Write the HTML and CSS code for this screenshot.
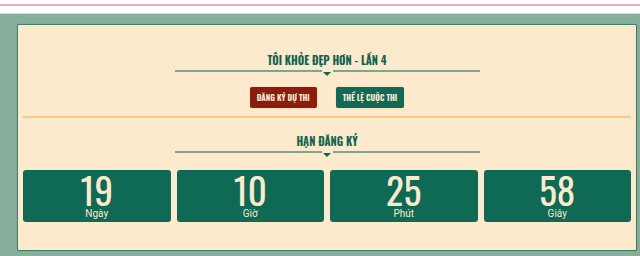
FILE: index.html
```html
<!DOCTYPE html>
<html>
<head>
  <meta charset="utf-8">
  <title>Tôi khỏe đẹp hơn - Lần 4</title>
  <link rel="stylesheet" href="styles.css">
</head>
<body>

  <div class="topbar"></div>

  <div class="main">
    <div class="card">

      <h2 class="tieude tieude-dau">TÔI KHỎE ĐẸP HƠN - LẦN 4</h2>
      <div class="divider">
        <span class="line"></span>
        <span class="mid"><i class="tri"></i></span>
        <span class="line"></span>
      </div>

      <div class="nut-hang">
        <a class="nut nut-do" href="#">ĐĂNG KÝ DỰ THI</a>
        <a class="nut nut-xanh" href="#">THỂ LỆ CUỘC THI</a>
      </div>

      <div class="ngancach"></div>

      <h2 class="tieude">HẠN ĐĂNG KÝ</h2>
      <div class="divider">
        <span class="line"></span>
        <span class="mid"><i class="tri"></i></span>
        <span class="line"></span>
      </div>

      <div class="demnguoc">
        <div class="o">
          <div class="so">19</div>
          <div class="nhan">Ngày</div>
        </div>
        <div class="o">
          <div class="so">10</div>
          <div class="nhan">Giờ</div>
        </div>
        <div class="o">
          <div class="so">25</div>
          <div class="nhan">Phút</div>
        </div>
        <div class="o">
          <div class="so">58</div>
          <div class="nhan">Giây</div>
        </div>
      </div>

    </div>
  </div>

</body>
</html>
```

FILE: styles.css
```css
body {
  margin: 0;
  background: #fff;
  font-family: Roboto, "Liberation Sans", sans-serif;
}

.topbar {
  margin-top: 4px;
  border-top: 2px solid #f2a4c3;
}

.main {
  margin-top: 7px;
  border-top: 1px solid #d9dcd9;
  background: #86ae9a;
  padding: 10px 3px 10px 17px;
}

.card {
  background: #fde9cb;
  border: 1px solid #3e8067;
  border-radius: 2px;
  box-shadow: 0 0 1px rgba(0, 0, 0, 0.25);
  padding: 5px 5px 28px 5px;
}

.tieude {
  margin: 14px 0 0 0;
  text-align: center;
  font-family: Oswald, "DejaVu Sans Condensed", sans-serif;
  font-weight: bold;
  font-size: 11px;
  line-height: 18px;
  color: #0f654f;
}

.tieude-dau {
  margin-top: 21px;
}

/* duong ke co mui ten o giua */
.divider {
  width: 305px;
  margin: 1px auto 0 auto;
  display: flex;
  align-items: flex-start;
}

.divider .line {
  flex: 1;
  height: 2px;
  background: #7ca891;
}

.divider .mid {
  width: 11px;
  display: flex;
  justify-content: center;
}

.divider .tri {
  margin-top: 2px;
  width: 0;
  height: 0;
  border-left: 4px solid transparent;
  border-right: 4px solid transparent;
  border-top: 4px solid #0f654f;
}

.nut-hang {
  margin-top: 11px;
  display: flex;
  justify-content: center;
  gap: 19px;
}

.nut {
  display: block;
  height: 21px;
  line-height: 21px;
  padding: 0 7px;
  border-radius: 2px;
  font-family: Oswald, "DejaVu Sans Condensed", sans-serif;
  font-weight: bold;
  font-size: 8px;
  color: #f7ead6;
  text-decoration: none;
  box-shadow: 0 0 1px rgba(0, 0, 0, 0.3);
}

.nut-do {
  background: #8d1c0c;
}

.nut-xanh {
  background: #0f6955;
}

.ngancach {
  margin: 8px 0 0 0;
  height: 2px;
  background: #fcc882;
}

.demnguoc {
  margin-top: 13px;
  display: grid;
  grid-template-columns: repeat(4, 1fr);
  gap: 6px;
}

.o {
  height: 52px;
  box-sizing: border-box;
  padding-top: 5px;
  background: #0e6955;
  border-radius: 3px;
  text-align: center;
  color: #fde9cb;
}

.so {
  font-family: Oswald, "DejaVu Sans Condensed", sans-serif;
  font-size: 37px;
  line-height: 30px;
}

.nhan {
  font-size: 10px;
  line-height: 17px;
}
```
